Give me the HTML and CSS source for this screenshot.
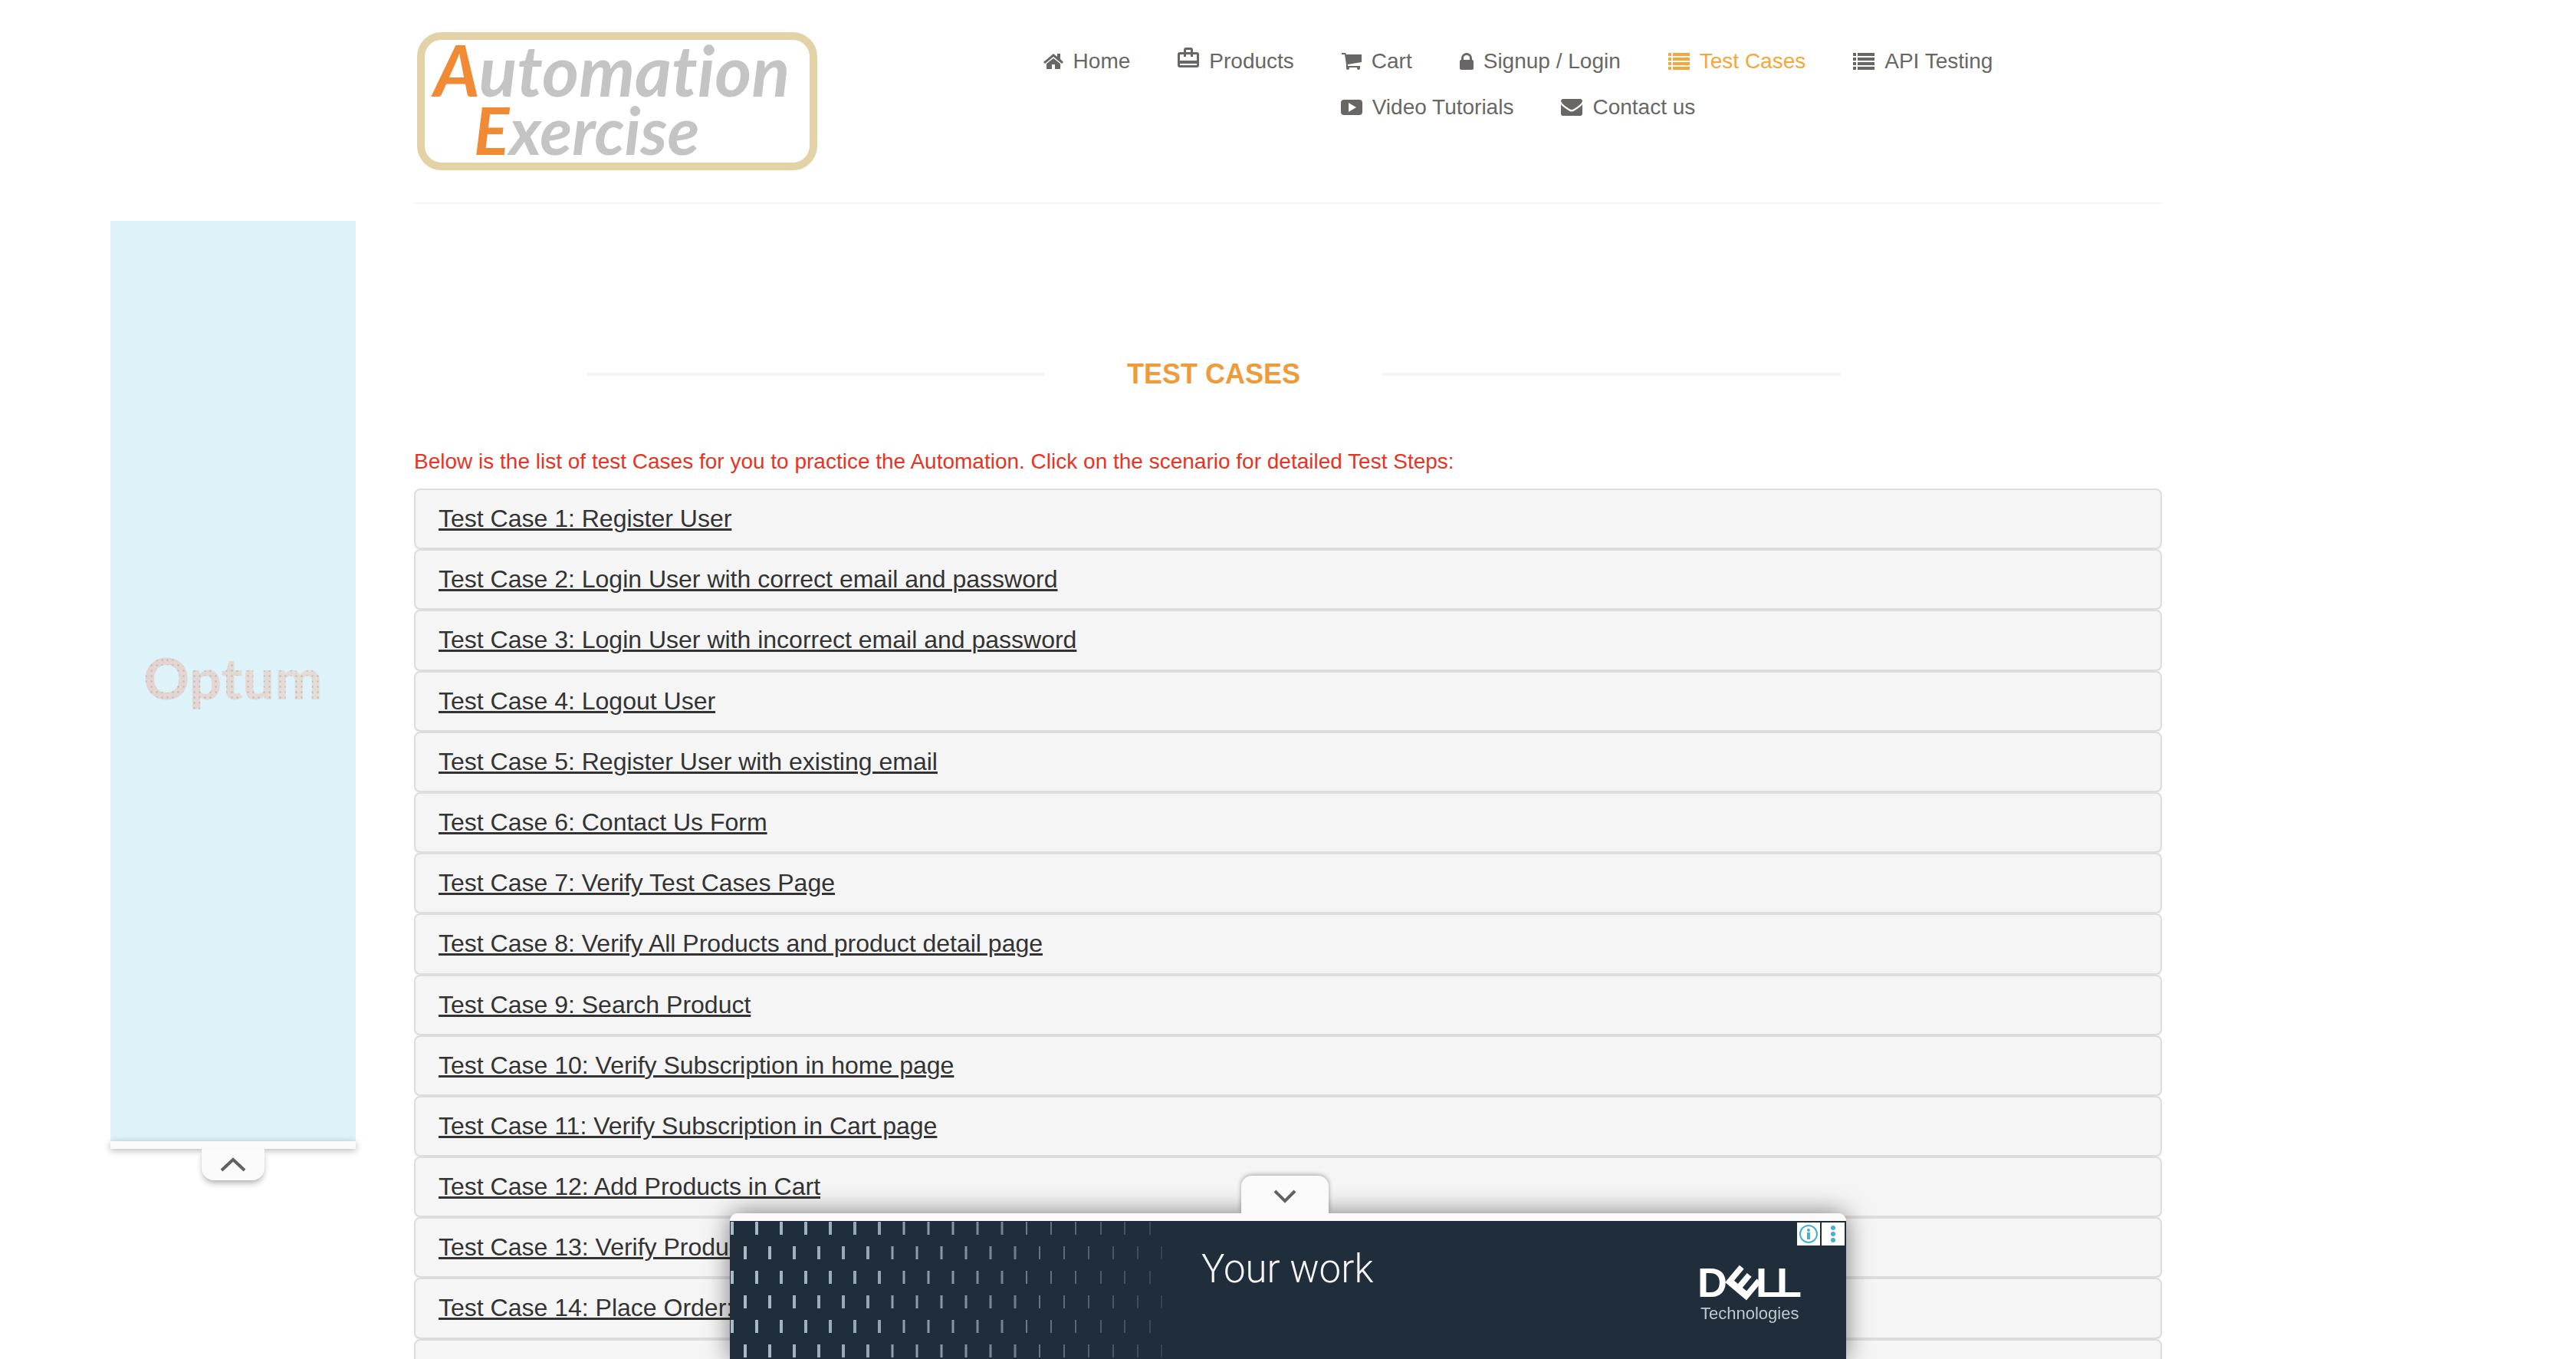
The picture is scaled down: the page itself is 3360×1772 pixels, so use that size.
FILE: index.html
```html
<!DOCTYPE html>
<html lang="en">
<head>
<meta charset="utf-8">
<title>Automation Practice Website for UI Testing - Test Cases</title>
<link rel="stylesheet" href="styles.css">
</head>
<body>
<svg class="sprite" aria-hidden="true">
  <symbol id="list" viewBox="0 0 28 22">
    <path d="M0 0h4v4H0zM6 0h22v4H6zM0 6h4v4H0zM6 6h22v4H6zM0 12h4v4H0zM6 12h22v4H6zM0 18h4v4H0zM6 18h22v4H6z"/>
  </symbol>
</svg>

<header class="container header">
  <a class="logo" href="#" aria-label="Automation Exercise">
    <span class="logo-top"><span class="accent">A</span>utomation</span>
    <span class="logo-bottom"><span class="accent">E</span>xercise</span>
  </a>
  <nav class="nav">
    <a href="#"><svg width="26" height="22" viewBox="0 0 26 22"><path d="M13 1 0 12l2 2L13 5l11 9 2-2-4-4V1h-4v4zM13 7l-9 7v7h7v-6h4v6h7v-7z"/></svg>Home</a>
    <a href="#"><svg width="28" height="44" viewBox="0 0 28 44"><path fill-rule="evenodd" d="M8 10V7q0-3 3-3h6q3 0 3 3v3h5q3 0 3 3v14q0 3-3 3H3q-3 0-3-3V13q0-3 3-3zm3 0h6V7h-6zM3 13v8h22v-8h-5v3h-3v-3h-6v3H8v-3zm0 12v2h22v-2z"/></svg>Products</a>
    <a href="#"><svg width="26" height="22" viewBox="0 0 26 22"><path d="M0 0h5l1 2h20v10L8 15v2h16v2H6v-4L4 2H0z"/><circle cx="8" cy="20" r="2"/><circle cx="22" cy="20" r="2"/></svg>Cart</a>
    <a href="#"><svg width="18" height="24" viewBox="0 0 18 24"><path fill-rule="evenodd" d="M2 10V8a7 7 0 0 1 14 0v2q2 0 2 2v9q0 2-2 2H2q-2 0-2-2v-9q0-2 2-2zm3 0h8V8a4 4 0 0 0-8 0z"/></svg>Signup / Login</a>
    <a class="active" href="#"><svg width="28" height="22"><use href="#list"/></svg>Test Cases</a>
    <a href="#"><svg width="28" height="22"><use href="#list"/></svg>API Testing</a>
    <a href="#"><svg width="28" height="20" viewBox="0 0 28 20"><path fill-rule="evenodd" d="M4 0q10-1 20 0 4 0 4 4v12q0 4-4 4-10 1-20 0-4 0-4-4V4q0-4 4-4zm6 4v12l10-6z"/></svg>Video Tutorials</a>
    <a href="#"><svg width="28" height="22" viewBox="0 0 28 22"><path d="M3 0h22q3 0 3 3-1 3-5 6l-6 4q-3 2-6 0L5 9Q1 6 0 3q0-3 3-3zM0 7q2 3 10 8 4 3 8 0 8-5 10-8v12q0 3-3 3H3q-3 0-3-3z"/></svg>Contact us</a>
  </nav>
</header>

<main class="container">
  <h2 class="title">Test Cases</h2>
  <p class="intro">Below is the list of test Cases for you to practice the Automation. Click on the scenario for detailed Test Steps:</p>
  <div class="cases">
    <h4 class="panel"><a href="#">Test Case 1: Register User</a></h4>
    <h4 class="panel"><a href="#">Test Case 2: Login User with correct email and password</a></h4>
    <h4 class="panel"><a href="#">Test Case 3: Login User with incorrect email and password</a></h4>
    <h4 class="panel"><a href="#">Test Case 4: Logout User</a></h4>
    <h4 class="panel"><a href="#">Test Case 5: Register User with existing email</a></h4>
    <h4 class="panel"><a href="#">Test Case 6: Contact Us Form</a></h4>
    <h4 class="panel"><a href="#">Test Case 7: Verify Test Cases Page</a></h4>
    <h4 class="panel"><a href="#">Test Case 8: Verify All Products and product detail page</a></h4>
    <h4 class="panel"><a href="#">Test Case 9: Search Product</a></h4>
    <h4 class="panel"><a href="#">Test Case 10: Verify Subscription in home page</a></h4>
    <h4 class="panel"><a href="#">Test Case 11: Verify Subscription in Cart page</a></h4>
    <h4 class="panel"><a href="#">Test Case 12: Add Products in Cart</a></h4>
    <h4 class="panel"><a href="#">Test Case 13: Verify Product quantity in Cart</a></h4>
    <h4 class="panel"><a href="#">Test Case 14: Place Order: Register while Checkout</a></h4>
    <h4 class="panel"><a href="#">Test Case 15: Place Order: Register before Checkout</a></h4>
  </div>
</main>

<aside class="side-ad">
  <a class="side-creative" href="#"><span class="optum">Optum</span></a>
  <div class="side-bar"></div>
  <button class="side-toggle" aria-label="Collapse ad"><svg width="34" height="20" viewBox="0 0 34 20"><path d="M2 17 17 3l15 14"/></svg></button>
</aside>

<aside class="anchor-ad">
  <button class="anchor-toggle" aria-label="Hide ad"><svg width="30" height="22" viewBox="0 0 30 22"><path d="M2 6l13 13L28 6"/></svg></button>
  <div class="anchor-bar"></div>
  <div class="anchor-creative">
    <svg class="dashes" width="570" height="180" viewBox="0 0 570 180" aria-hidden="true">
      <defs>
        <linearGradient id="fade"><stop offset="0" stop-color="#fff"/><stop offset=".5" stop-color="#fff" stop-opacity=".75"/><stop offset="1" stop-color="#fff" stop-opacity=".15"/></linearGradient>
        <mask id="fademask"><rect width="570" height="180" fill="url(#fade)"/></mask>
      </defs>
      <g mask="url(#fademask)">
        <g stroke-dasharray="17 47">
          <path stroke-width="4" d="M3 1V180M35 1V180M67 1V180M99 1V180M131 1V180M163 1V180M195 1V180"/>
          <path stroke-width="3" d="M227 1V180M259 1V180M291 1V180M323 1V180M355 1V180"/>
          <path stroke-width="2" d="M387 1V180M419 1V180M451 1V180M484 1V180M515 1V180M548 1V180"/>
          <path stroke-width="4" d="M20 33V180M52 33V180M84 33V180M116 33V180M148 33V180M180 33V180"/>
          <path stroke-width="3" d="M212 33V180M244 33V180M276 33V180M308 33V180M340 33V180M372 33V180"/>
          <path stroke-width="2" d="M404 33V180M436 33V180M468 33V180M500 33V180M532 33V180M563 33V180"/>
        </g>
      </g>
    </svg>
    <span class="headline">Your work</span>
    <div class="dell">
      <svg width="132" height="46" viewBox="0 0 132 46" role="img" aria-label="Dell">
        <text x="-4" y="40">D</text>
        <text class="tilt" x="-17" y="18" transform="translate(55 21) rotate(-50)">E</text>
        <text x="72" y="40">L</text>
        <text x="99" y="40">L</text>
      </svg>
      <span class="tech">Technologies</span>
    </div>
    <div class="choices">
      <button aria-label="Why this ad"><svg width="26" height="26" viewBox="0 0 26 26"><circle cx="13" cy="13" r="11" fill="none" stroke="#4aaecf" stroke-width="2"/><circle cx="13" cy="8" r="2"/><path d="M11 11h4v9h-4z"/></svg></button>
      <button aria-label="Ad options"><svg width="26" height="26" viewBox="0 0 26 26"><circle cx="13" cy="5" r="3"/><circle cx="13" cy="13" r="3"/><circle cx="13" cy="21" r="3"/></svg></button>
    </div>
  </div>
</aside>
</body>
</html>
```
FILE: styles.css
```css
* { box-sizing: border-box; }

body {
  margin: 0;
  background: #fff;
  color: #696763;
  font-family: "Liberation Sans", Arial, sans-serif;
  font-size: 28px;
  line-height: 40px;
}

a { color: inherit; text-decoration: none; }
button { border: 0; padding: 0; cursor: pointer; }
.sprite { display: none; }

.container { max-width: 2280px; margin: 0 auto; }

/* header */
.header {
  display: flex;
  justify-content: space-between;
  align-items: flex-start;
  padding: 42px 180px 42px 4px;
  border-bottom: 2px solid #f5f5f5;
}

.logo {
  display: flex;
  flex-direction: column;
  width: 522px;
  height: 180px;
  padding-left: 12px;
  border: 10px solid #e3d2a6;
  border-radius: 32px;
  color: #c4c4c4;
  font-family: Lato, sans-serif;
  font-style: italic;
  font-weight: 700;
  font-variant-ligatures: none;
  line-height: 78px;
}
.logo-top { font-size: 92px; }
.logo-bottom { font-size: 86px; padding-left: 52px; }
.accent { color: #f08a35; }

.nav {
  display: flex;
  flex-wrap: wrap;
  justify-content: center;
  gap: 20px 62px;
  width: 1320px;
  padding-top: 18px;
}
.nav a { display: flex; align-items: center; gap: 13px; height: 40px; }
.nav svg { fill: currentColor; }
.nav .active { color: #f4a83c; }

/* test case list */
.title {
  display: flex;
  align-items: center;
  gap: 107px;
  margin: 198px 419px 0 225px;
  color: #ee9c3b;
  font-size: 36px;
  line-height: 48px;
  text-transform: uppercase;
}
.title::before, .title::after {
  content: "";
  flex: 1;
  height: 4px;
  background: #f5f5f5;
}

.intro { margin: 70px 0 15px; color: #e73323; }

.panel {
  margin: 0;
  padding: 20px 30px;
  background: #f5f5f5;
  border: 2px solid #ddd;
  border-radius: 8px;
  box-shadow: 0 2px 2px rgba(0, 0, 0, .05);
  color: #333;
  font-size: 32px;
  font-weight: 400;
  line-height: 1.1;
}
.panel a { text-decoration: underline; text-decoration-thickness: 3px; }

/* side rail ad */
.side-ad {
  position: fixed;
  top: 288px;
  left: 144px;
  width: 320px;
  display: flex;
  flex-direction: column;
  align-items: center;
}
.side-creative {
  display: flex;
  justify-content: center;
  align-items: center;
  width: 100%;
  height: 1200px;
  padding-bottom: 8px;
  background: #ddf3f9;
}
.optum {
  color: transparent;
  background:
    radial-gradient(circle, #bdb3bd 0, transparent 2px) 0 0 / 7px 7px,
    linear-gradient(90deg, #e4d3d0, #e4ddd6);
  -webkit-background-clip: text;
  background-clip: text;
  font-family: Lato, sans-serif;
  font-size: 74px;
  font-weight: 900;
  line-height: 96px;
}
.side-bar {
  width: 100%;
  height: 10px;
  background: #fafafa;
  box-shadow: 0 2px 10px rgba(0, 0, 0, .3);
}
.side-toggle {
  z-index: 1;
  width: 82px;
  height: 41px;
  background: #fafafa;
  border-radius: 0 0 16px 16px;
  box-shadow: 0 5px 8px -2px rgba(0, 0, 0, .35);
}
.side-toggle svg, .anchor-toggle svg {
  display: block;
  margin: 0 auto;
  fill: none;
  stroke: #616161;
  stroke-width: 4;
}

/* bottom anchor ad */
.anchor-ad {
  position: fixed;
  bottom: 0;
  left: 50%;
  width: 1456px;
  margin-left: -728px;
  display: flex;
  flex-direction: column;
  align-items: center;
}
.anchor-toggle {
  width: 114px;
  height: 49px;
  margin-right: 8px;
  background: #fafafa;
  border-radius: 14px 14px 0 0;
  box-shadow: 0 -1px 6px rgba(0, 0, 0, .35);
}
.anchor-bar {
  position: relative;
  width: 100%;
  height: 10px;
  background: #fafafa;
  border-radius: 10px 10px 0 0;
}
.anchor-ad::before {
  content: "";
  position: absolute;
  z-index: -1;
  inset: 49px 0 0;
  border-radius: 10px 10px 0 0;
  box-shadow: 0 0 32px rgba(0, 0, 0, .5);
}
.anchor-creative {
  position: relative;
  display: flex;
  align-items: flex-start;
  width: 100%;
  height: 180px;
  background: #202d3a;
}
.dashes { stroke: #a9bdce; }
.headline {
  margin: 31px auto 0 45px;
  color: #f5f5f5;
  font-family: Roboto, sans-serif;
  font-size: 51px;
  font-weight: 300;
  line-height: 64px;
}
.dell {
  display: flex;
  flex-direction: column;
  margin: 59px 60px 0 0;
  width: 130px;
  color: #fff;
  font-size: 22px;
  line-height: 32px;
}
.dell svg { overflow: visible; fill: #fff; font-size: 54px; font-weight: 700; }
.dell .tilt { font-size: 50px; stroke: #fff; stroke-width: 2; }
.tech { color: #c3c8cd; }
.choices {
  position: absolute;
  top: 2px;
  right: 2px;
  display: flex;
  gap: 2px;
}
.choices button { width: 30px; height: 30px; background: #fff; }
.choices svg { display: block; margin: 0 auto; fill: #4aaecf; }
```
